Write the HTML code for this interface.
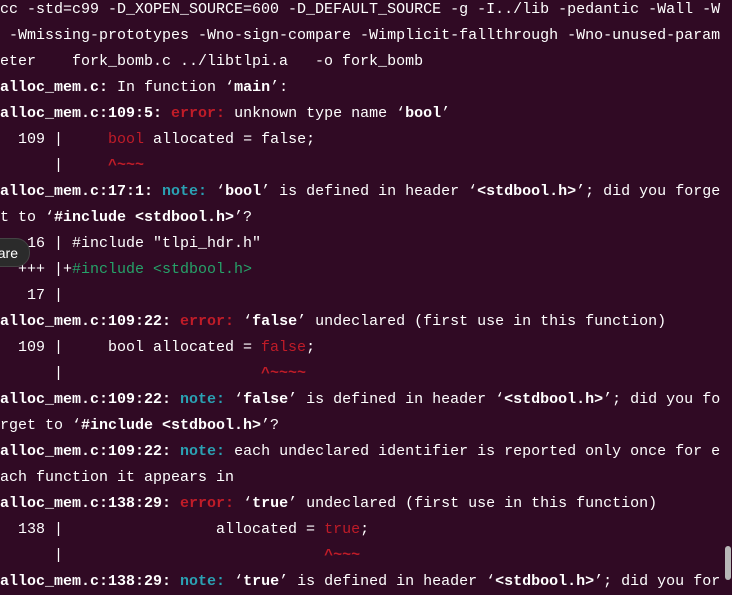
<!DOCTYPE html>
<html><head><meta charset="utf-8"><style>
html,body{margin:0;padding:0;background:#300a24;width:732px;height:592px;overflow:hidden}
pre{margin:0;position:absolute;left:0;top:-3px;font-family:"Liberation Mono","DejaVu Sans Mono",monospace;font-size:15px;line-height:26px;color:#ffffff;white-space:pre}
b{font-weight:bold}
.r{color:#c01c28}
.rb{color:#c01c28;font-weight:bold}
.c{color:#2aa1b3;font-weight:bold}
.g{color:#26a269}
.tip{position:absolute;left:-14px;top:238px;width:44px;height:29px;border-radius:14px;background:#2b2b2b;border:1px solid #444;color:#fff;font-family:"Liberation Sans",sans-serif;font-size:14px;line-height:29px;text-align:right;padding-right:0;box-sizing:border-box;padding-right:11px}
.sb{position:absolute;left:725px;top:546px;width:6px;height:34px;border-radius:3px;background:#b8b8b8}
</style></head><body>
<pre>cc -std=c99 -D_XOPEN_SOURCE=600 -D_DEFAULT_SOURCE -g -I../lib -pedantic -Wall -W
 -Wmissing-prototypes -Wno-sign-compare -Wimplicit-fallthrough -Wno-unused-param
eter    fork_bomb.c ../libtlpi.a   -o fork_bomb
<b>alloc_mem.c:</b> In function ‘<b>main</b>’:
<b>alloc_mem.c:109:5:</b> <span class="rb">error: </span>unknown type name ‘<b>bool</b>’
  109 |     <span class="r">bool</span> allocated = false;
      |     <span class="rb">^~~~</span>
<b>alloc_mem.c:17:1:</b> <span class="c">note: </span>‘<b>bool</b>’ is defined in header ‘<b>&lt;stdbool.h&gt;</b>’; did you forge
t to ‘<b>#include &lt;stdbool.h&gt;</b>’?
   16 | #include "tlpi_hdr.h"
  +++ |+<span class="g">#include &lt;stdbool.h&gt;</span>
   17 |
<b>alloc_mem.c:109:22:</b> <span class="rb">error: </span>‘<b>false</b>’ undeclared (first use in this function)
  109 |     bool allocated = <span class="r">false</span>;
      |                      <span class="rb">^~~~~</span>
<b>alloc_mem.c:109:22:</b> <span class="c">note: </span>‘<b>false</b>’ is defined in header ‘<b>&lt;stdbool.h&gt;</b>’; did you fo
rget to ‘<b>#include &lt;stdbool.h&gt;</b>’?
<b>alloc_mem.c:109:22:</b> <span class="c">note: </span>each undeclared identifier is reported only once for e
ach function it appears in
<b>alloc_mem.c:138:29:</b> <span class="rb">error: </span>‘<b>true</b>’ undeclared (first use in this function)
  138 |                 allocated = <span class="r">true</span>;
      |                             <span class="rb">^~~~</span>
<b>alloc_mem.c:138:29:</b> <span class="c">note: </span>‘<b>true</b>’ is defined in header ‘<b>&lt;stdbool.h&gt;</b>’; did you for</pre>
<div class="tip">are</div>
<div class="sb"></div>
</body></html>
